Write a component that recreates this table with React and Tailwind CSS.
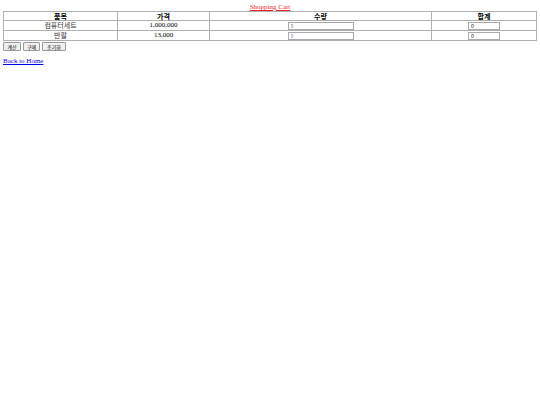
import { useState } from "react";

const items = [
  { name: "컴퓨터세트", price: "1,000,000" },
  { name: "반팔", price: "13,000" },
];

export default function App() {
  const [qty] = useState(["0", "0"]);

  return (
    <div className="w-[540px] h-[405px] bg-white px-[3px] font-['Liberation_Serif',serif] text-[7px] text-black">
      <div className="text-center pt-[3px] leading-[8px]">
        <a href="#" className="text-[#ee2222] underline">
          Shopping Cart
        </a>
      </div>
      <table className="w-full border-collapse border border-[#b0b0b0] font-['Noto_Sans_CJK_KR',sans-serif]">
        <thead>
          <tr className="h-[9px]">
            <th className="w-[114px] p-0 border border-[#b0b0b0] font-bold leading-[7px]">품목</th>
            <th className="w-[92px] p-0 border border-[#b0b0b0] font-bold leading-[7px]">가격</th>
            <th className="w-[222px] p-0 border border-[#b0b0b0] font-bold leading-[7px]">수량</th>
            <th className="p-0 border border-[#b0b0b0] font-bold leading-[7px]">합계</th>
          </tr>
        </thead>
        <tbody>
          {items.map((item, idx) => (
            <tr key={idx} className="h-[10px]">
              <td className="p-0 border border-[#b0b0b0] text-center leading-[7px] text-[#333]">{item.name}</td>
              <td className="p-0 border border-[#b0b0b0] text-center leading-[7px] font-['Liberation_Serif',serif]">
                {item.price}
              </td>
              <td className="border border-[#b0b0b0] text-center leading-[0px] p-0">
                <input
                  readOnly
                  value={qty[idx]}
                  className="w-[66px] h-[8px] border border-[#aaa] text-[5px] px-[2px] text-[#777] align-middle"
                />
              </td>
              <td className="border border-[#b0b0b0] text-center leading-[0px] p-0">
                <input
                  readOnly
                  value="0"
                  className="w-[32px] h-[8px] border border-[#aaa] text-[5px] px-[2px] text-black align-middle"
                />
              </td>
            </tr>
          ))}
        </tbody>
      </table>
      <div className="flex gap-[2px] mt-[1px] font-['Noto_Sans_CJK_KR',sans-serif]">
        <button className="w-[18px] h-[9px] border border-[#999] bg-[#efefef] text-[5px] leading-[7px] rounded-[1px]">계산</button>
        <button className="w-[17px] h-[9px] border border-[#999] bg-[#efefef] text-[5px] leading-[7px] rounded-[1px]">구매</button>
        <button className="w-[24px] h-[9px] border border-[#999] bg-[#efefef] text-[5px] leading-[7px] rounded-[1px]">초기화</button>
      </div>
      <div className="mt-[6px] leading-[8px]">
        <a href="#" className="text-[#0000ee] underline">
          Back to Home
        </a>
      </div>
    </div>
  );
}
